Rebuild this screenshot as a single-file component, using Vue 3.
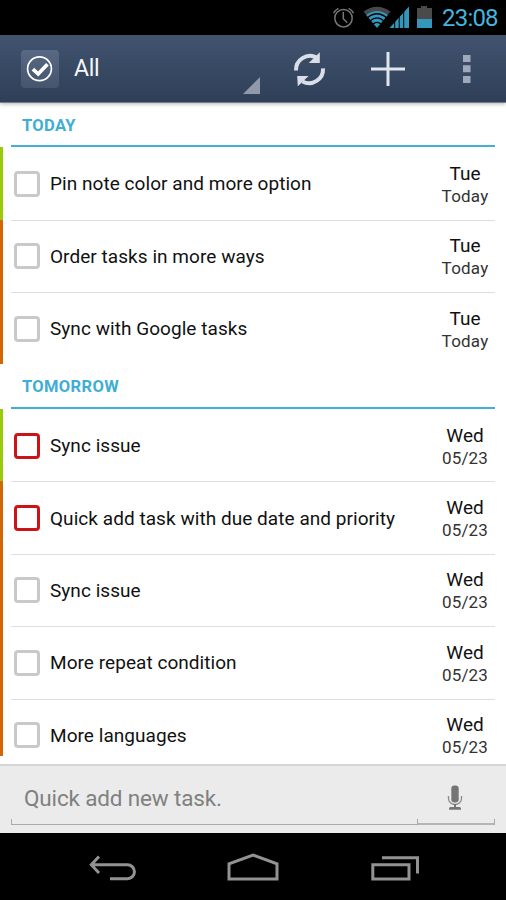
<script setup>
const groups = [
  {
    title: 'Today',
    tasks: [
      { name: 'Pin note color and more option', day: 'Tue', date: 'Today', color: 'green' },
      { name: 'Order tasks in more ways', day: 'Tue', date: 'Today', color: 'orange' },
      { name: 'Sync with Google tasks', day: 'Tue', date: 'Today', color: 'orange' },
    ],
  },
  {
    title: 'Tomorrow',
    tasks: [
      { name: 'Sync issue', day: 'Wed', date: '05/23', color: 'green', urgent: true },
      { name: 'Quick add task with due date and priority', day: 'Wed', date: '05/23', color: 'orange', urgent: true },
      { name: 'Sync issue', day: 'Wed', date: '05/23', color: 'orange' },
      { name: 'More repeat condition', day: 'Wed', date: '05/23', color: 'orange' },
      { name: 'More languages', day: 'Wed', date: '05/23', color: 'orange' },
    ],
  },
]
</script>

<template>
  <div class="screen">
    <div class="status">
      <svg class="status-icons" width="106" height="35" viewBox="330 0 106 35">
        <g fill="none" stroke="#777" stroke-width="1.5">
          <circle cx="343.5" cy="18.2" r="8.7" />
          <path d="M343.3 12v6.7l4 4M333.6 13.2q1.7-3.2 4.8-4.8M348.6 8.4q3.2 1.6 4.9 4.800" />
        </g>
        <path d="M363.5 11.5Q377 2 390.5 11.5L387.2 15.5Q377 7.8 366.8 15.5Z" fill="#484848" />
        <path d="M366.2 15Q377 7 387.8 15L377 28Z" fill="#3596bb" />
        <g fill="none" stroke="#000" stroke-width="1.3">
          <path d="M367.500 17.700Q377 9.800 386.500 17.700M370 21Q377 14.800 384 21M372.500 24.200Q377 20.400 381.500 24.200" />
        </g>
        <path d="M389.5 28L409 6.5V28Z" fill="#3596bb" />
        <path d="M394.700 20v8M399.200 15v13M403.700 10v18" stroke="#000" stroke-width="1" />
        <path d="M417 8h4V6h6v2h5v11h-15Z" fill="#4a4a4a" />
        <path d="M417 19h15v9h-15Z" fill="#3596bb" />
      </svg>
      <span class="clock">23:08</span>
    </div>

    <header class="bar">
      <div class="logo">
        <svg width="38" height="38" viewBox="0 0 38 38">
          <circle cx="18.5" cy="18.8" r="11.9" fill="none" stroke="#fff" stroke-width="1.7" />
          <path d="M11.900 19.200L17.200 24L26.400 14.200" fill="none" stroke="#fff" stroke-width="3.700" />
        </svg>
      </div>
      <div class="spinner">
        <span>All</span>
        <svg width="17" height="17" viewBox="0 0 17 17"><path d="M17 0V17H0Z" fill="#8f99aa" /></svg>
      </div>
      <svg width="213" height="67" viewBox="20 0 213 67">
        <g fill="none" stroke="#d9dfe9" stroke-width="4">
          <path d="M23 35.500A14 14 0 0 1 43.500 22.500" />
          <path d="M50 33.300A14 14 0 0 1 29.500 46.500" />
        </g>
        <path d="M46.800 17.300V28H35.800Z M24.200 40.900H35.600L24.800 51.300Z" fill="#d9dfe9" />
        <path d="M98 32.500H132V35.500H98Z M113.500 17H116.500V51H113.500Z" fill="#e1e5ed" />
        <path d="M190 20h7.500v7H190Z M190 30.300h7.500v7H190Z M190 41h7.500v7H190Z" fill="#a0a9b9" />
      </svg>
    </header>

    <main class="list">
      <section v-for="group in groups" :key="group.title">
        <h2>{{ group.title }}</h2>
        <div v-for="(task, i) in group.tasks" :key="i" class="row" :class="task.color">
          <div class="line">
            <i class="check" :class="{ urgent: task.urgent }"></i>
            <span class="name">{{ task.name }}</span>
            <div class="due">
              <span class="day">{{ task.day }}</span>
              <span class="date">{{ task.date }}</span>
            </div>
          </div>
        </div>
      </section>
    </main>

    <footer class="quick">
      <div class="field">Quick add new task.</div>
      <div class="voice">
        <svg width="16" height="26" viewBox="0 0 16 26">
          <rect x="4.3" y="0.5" width="7.4" height="17" rx="3.3" fill="#757575" />
          <path d="M1.500 11v2.500a6.500 6 0 0 0 13 0V11" fill="none" stroke="#8a8a8a" stroke-width="1.300" />
          <path d="M7 19h2v3h3.500q1.500 0 1.500 1.500v1.300H2v-1.300Q2 22 3.500 22H7Z" fill="#757575" />
        </svg>
      </div>
    </footer>

    <nav class="nav">
      <svg width="506" height="67" viewBox="0 833 506 67" fill="none" stroke="#929292" stroke-width="3">
        <path d="M91 864.800H127.500A6.900 6.900 0 0 1 127.500 878.700H110M99 856.500L91.300 864.800L99 873" />
        <path d="M229 879V863.800L253 855L277 863.800V879Z" />
        <path d="M372.800 864.800H409V879H372.800ZM382 857.800H417.500V873.500" />
      </svg>
    </nav>
  </div>
</template>

<style>
body {
  margin: 0;
}
</style>

<style scoped>
.screen {
  display: flex;
  flex-direction: column;
  width: 506px;
  height: 900px;
  overflow: hidden;
  background: #fff;
  color: #111;
  font-family: Roboto, sans-serif;
}
.status {
  flex: none;
  display: flex;
  justify-content: flex-end;
  height: 35px;
  background: #000;
}
.clock {
  width: 70px;
  padding-left: 6px;
  box-sizing: border-box;
  font-size: 24px;
  line-height: 36px;
  letter-spacing: -0.8px;
  color: #45b4df;
}
.bar {
  flex: none;
  display: flex;
  align-items: flex-start;
  height: 67px;
  background: linear-gradient(#41536f, #2f3f58);
  border-bottom: 1px solid #77808e;
  box-shadow: 0 1px 4px rgba(0, 0, 0, 0.3);
}
.logo {
  width: 38px;
  height: 38px;
  margin: 15px 0 0 21px;
  border-radius: 4px;
  background: linear-gradient(#586985, #46556d);
}
.spinner {
  flex: 1;
  display: flex;
  align-items: flex-end;
  justify-content: space-between;
  height: 59px;
  margin-left: 15px;
  padding-right: 33px;
}
.spinner span {
  align-self: center;
  padding-top: 7px;
  font-size: 23px;
  letter-spacing: -0.3px;
  color: #f5f7fa;
}
.list {
  flex: none;
  height: 653px;
  overflow: hidden;
}
h2 {
  height: 44.6px;
  margin: 0 11px;
  padding-left: 11px;
  box-sizing: border-box;
  border-bottom: 2px solid #44afd4;
  font-size: 16.5px;
  font-weight: 700;
  line-height: 46px;
  letter-spacing: 0.35px;
  text-transform: uppercase;
  color: #3eaed5;
}
.list section:first-child h2 {
  height: 44.2px;
}
.row {
  height: 72.4px;
  box-sizing: border-box;
  border-left: 3px solid;
}
.green {
  border-left-color: #99cb08;
}
.orange {
  border-left-color: #d36708;
}
.line {
  display: flex;
  align-items: center;
  height: 100%;
  box-sizing: border-box;
  margin: 0 11px 0 8px;
  padding-left: 3px;
  border-top: 1px solid transparent;
}
.row + .row .line {
  border-top-color: #dedede;
}
.check {
  width: 26px;
  height: 26px;
  box-sizing: border-box;
  border: 3px solid #c9c9c9;
  border-radius: 4px;
}
.check.urgent {
  border-color: #cc1416;
}
.name {
  flex: 1;
  padding-left: 10px;
  font-size: 19px;
  letter-spacing: 0.05px;
  white-space: nowrap;
}
.due {
  display: flex;
  flex-direction: column;
  align-items: center;
  width: 60px;
  padding-top: 1px;
}
.day {
  font-size: 19px;
  line-height: 23px;
}
.date {
  font-size: 17px;
  line-height: 22px;
  letter-spacing: 0.2px;
  color: #333;
}
.quick {
  flex: none;
  display: flex;
  height: 69px;
  box-sizing: border-box;
  padding: 0 11px 8px;
  background: #ebebeb;
  border-top: 2px solid #d5d5d5;
  margin-top: 8px;
}
.field,
.voice {
  --line: #aaa;
  box-sizing: border-box;
  background:
    linear-gradient(var(--line), var(--line)) left bottom / 1px 6px no-repeat,
    linear-gradient(var(--line), var(--line)) left bottom / 100% 1px no-repeat;
}
.field {
  width: 406px;
  padding-left: 13px;
  font-size: 22.5px;
  line-height: 65px;
  letter-spacing: -0.15px;
  color: #808080;
}
.voice {
  flex: 1;
  padding: 19px 0 0 30px;
  background:
    linear-gradient(var(--line), var(--line)) left bottom / 1px 6px no-repeat,
    linear-gradient(var(--line), var(--line)) right bottom / 1px 6px no-repeat,
    linear-gradient(#b5b5b5, #b5b5b5) left bottom / 100% 2px no-repeat;
}
.nav {
  flex: none;
  height: 68px;
  background: #000;
}
</style>
